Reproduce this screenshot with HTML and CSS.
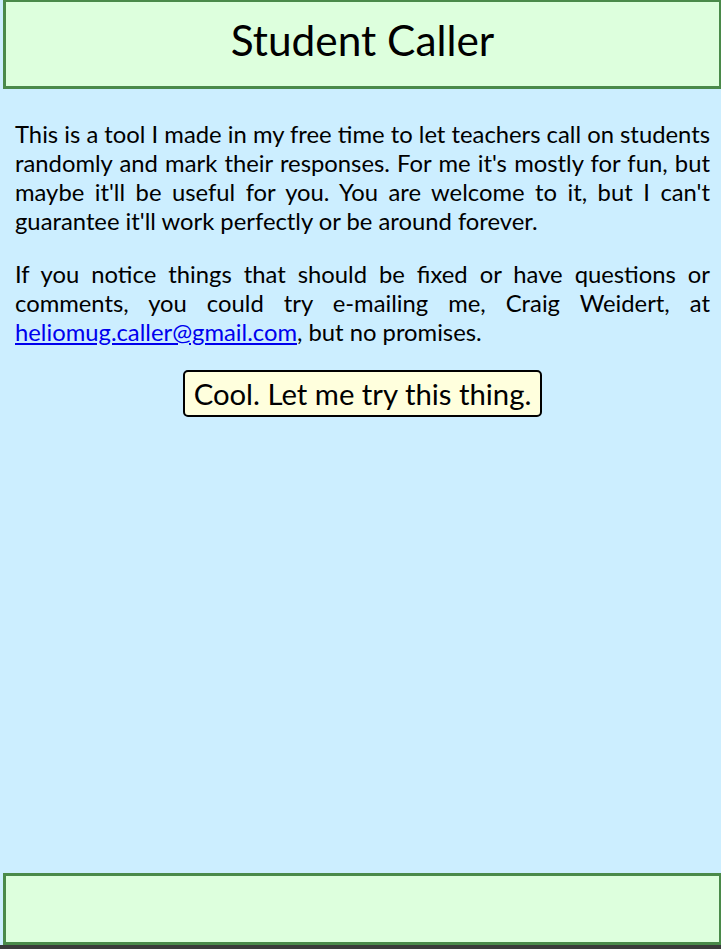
FILE: index.html
```html
<!DOCTYPE html>
<html lang="en">
<head>
<meta charset="utf-8">
<title>Student Caller</title>
<link rel="stylesheet" href="styles.css">
</head>
<body>
<header class="banner">
  <h1 class="title">Student Caller</h1>
</header>
<main class="content">
  <p class="intro">This is a tool I made in my free time to let teachers call on students randomly and mark their responses. For me it's mostly for fun, but maybe it'll be useful for you. You are welcome to it, but I can't guarantee it'll work perfectly or be around forever.</p>
  <p class="intro">If you notice things that should be fixed or have questions or comments, you could try e-mailing me, Craig Weidert, at <a href="#" class="mail">heliomug.caller@gmail.com</a>, but no promises.</p>
  <div class="actions">
    <button class="start">Cool. Let me try this thing.</button>
  </div>
</main>
<footer class="footer"></footer>
<div class="bottom-strip"></div>
</body>
</html>
```

FILE: styles.css
```css
html, body {
  margin: 0;
  padding: 0;
}
body {
  background: #cceeff;
  font-family: Lato, "Open Sans", sans-serif;
  color: #000;
  height: 100vh;
  display: flex;
  flex-direction: column;
  overflow: hidden;
}
.banner {
  flex: none;
  height: 84px;
  margin: 0 -1px 0 3px;
  border: 3px solid #4a8a4a;
  border-top-width: 2px;
  background: #ddffdd;
  display: flex;
  align-items: center;
  justify-content: center;
}
.title {
  margin: 0;
  font-size: 42.4px;
  font-weight: 400;
  line-height: 1.2;
  padding-bottom: 7px;
}
.content {
  flex: 1;
  padding: 7px 11px 0 15px;
}
.intro {
  margin: 24px 0;
  font-size: 23.8px;
  line-height: 29px;
  text-align: justify;
}
.mail {
  color: #0000ee;
  text-decoration: underline;
}
.actions {
  display: flex;
  justify-content: center;
  margin-top: -1px;
}
.start {
  font-family: Lato, "Open Sans", sans-serif;
  font-size: 29.3px;
  line-height: 1.2;
  color: #000;
  background: #ffffdd;
  border: 2px solid #000;
  border-radius: 5px;
  padding: 4px 9px 4px;
}
.footer {
  flex: none;
  height: 66px;
  margin: 0 -1px 0 3px;
  border: 3px solid #4a8a4a;
  background: #ddffdd;
}
.bottom-strip {
  flex: none;
  height: 4px;
  background: #3a3a3a;
}
```
